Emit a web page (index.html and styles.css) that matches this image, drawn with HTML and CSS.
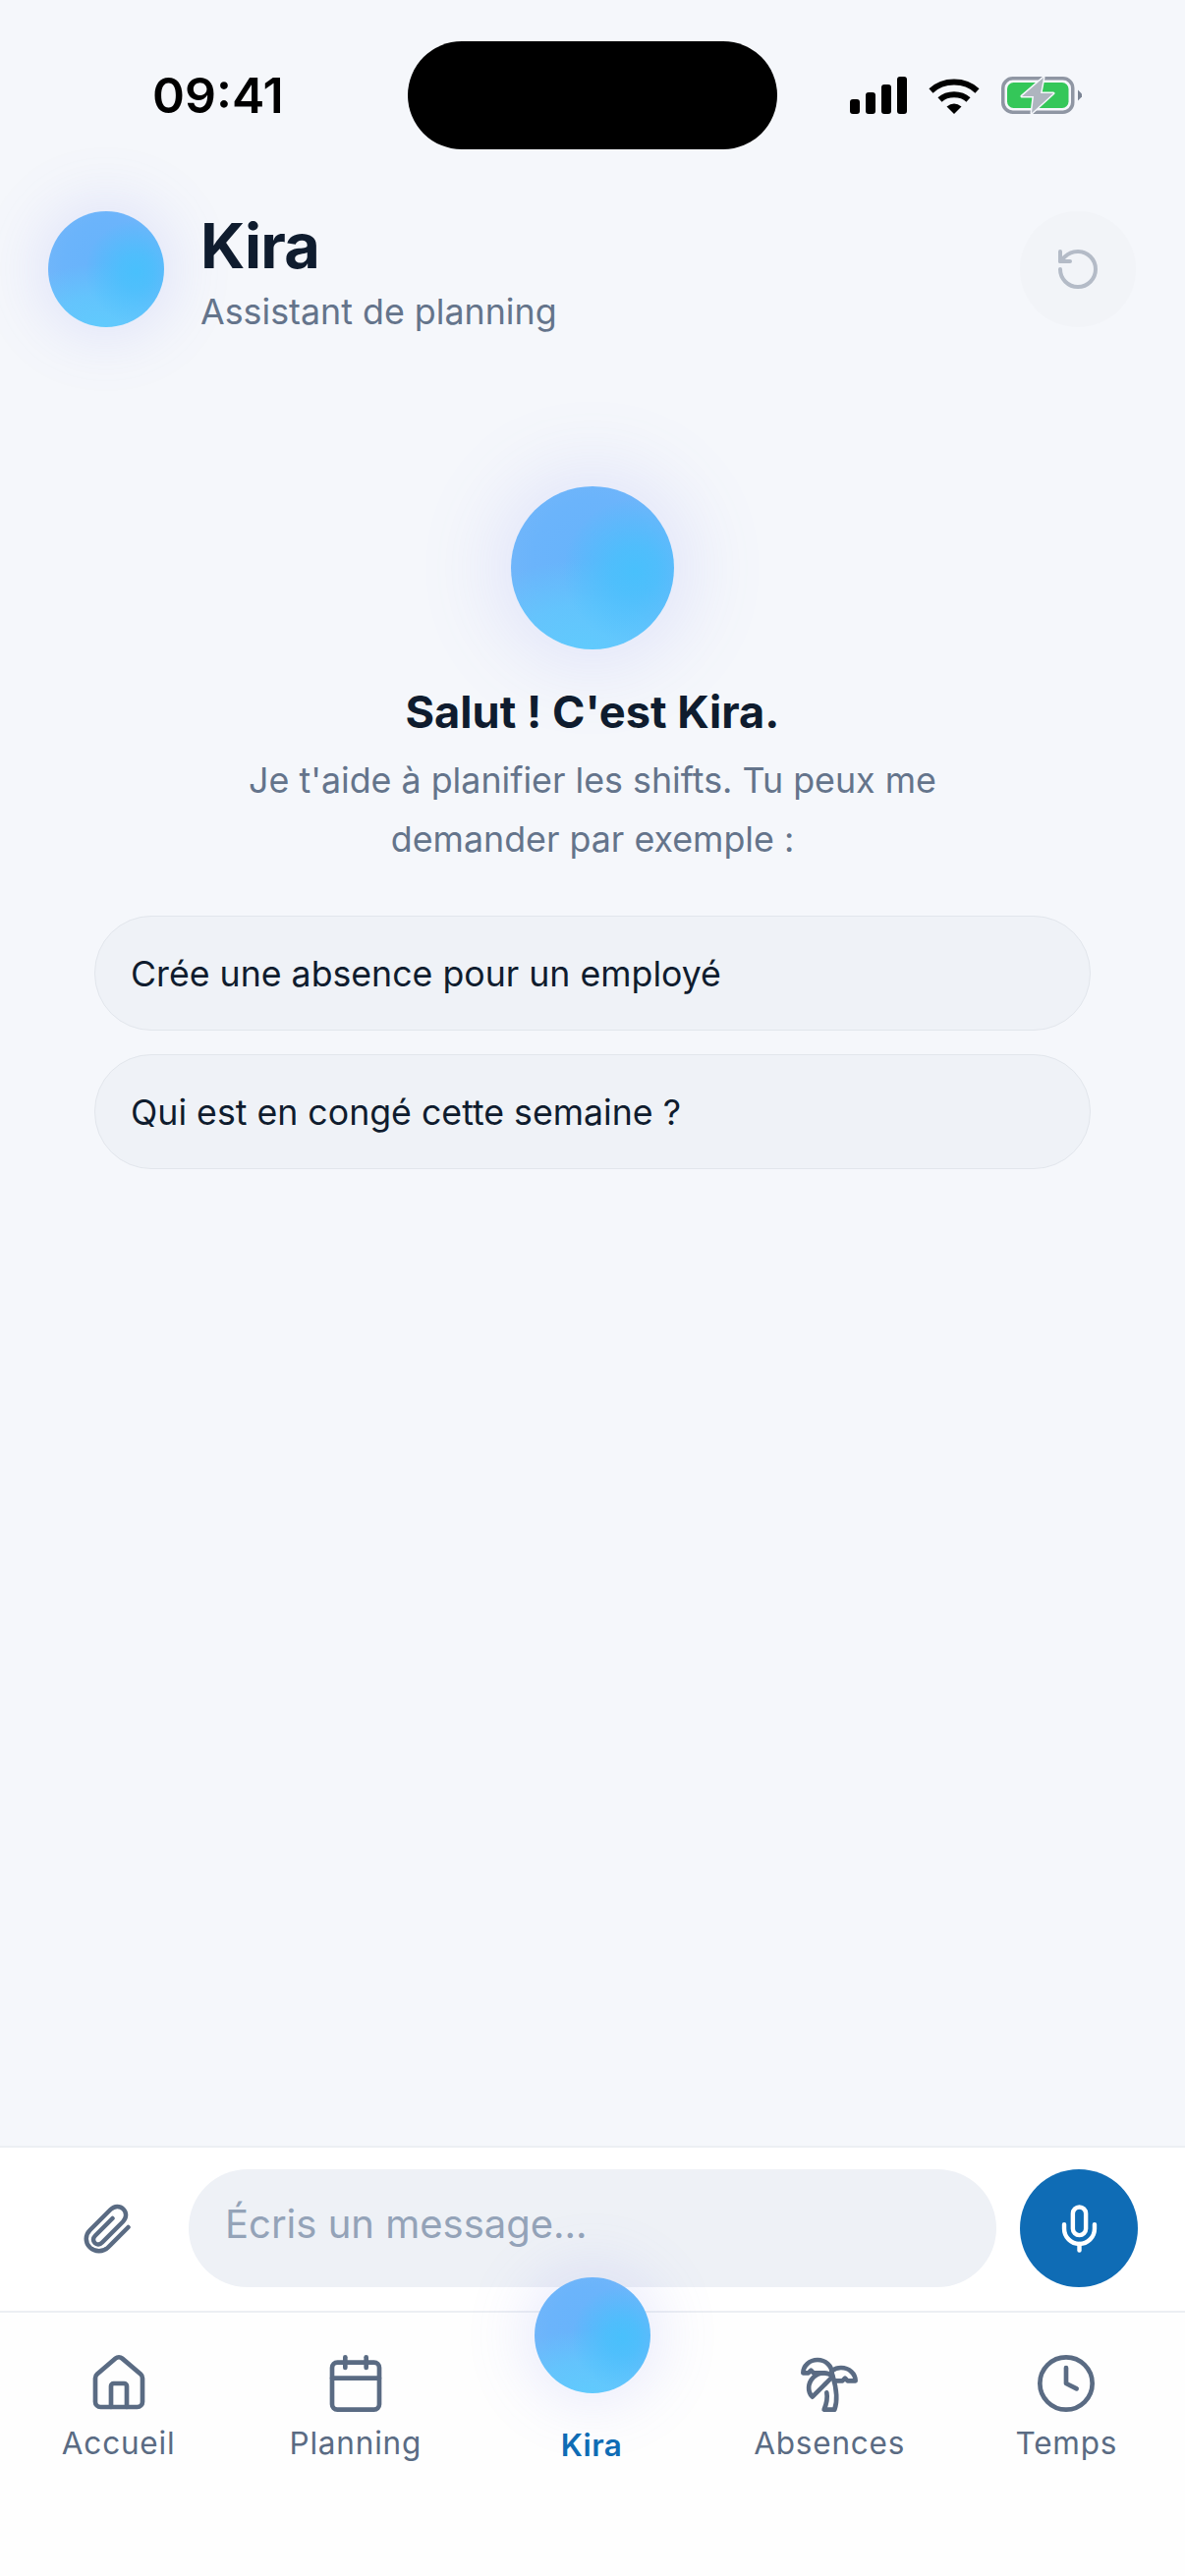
FILE: index.html
```html
<!DOCTYPE html>
<html lang="fr">
<head>
  <meta charset="UTF-8">
  <meta name="viewport" content="width=device-width, initial-scale=1.0">
  <title>Kira</title>
  <link rel="stylesheet" href="styles.css">
</head>
<body>
  <div class="status-bar">
    <span class="time">09:41</span>
    <div class="island"></div>
    <div class="status-icons">
      <svg class="signal" width="58" height="38" viewBox="0 0 58 38">
        <rect x="0" y="23" width="10" height="15" rx="3"/>
        <rect x="16" y="16" width="10" height="22" rx="3"/>
        <rect x="32" y="8" width="10" height="30" rx="3"/>
        <rect x="48" y="0" width="10" height="38" rx="3"/>
      </svg>
      <svg class="wifi" width="52" height="38" viewBox="0 0 52 38" fill="none" stroke="#000" stroke-width="6">
        <path d="M2.5 14.5C15 2.5 37 2.5 49.5 14.5"/>
        <path d="M11.5 23.5C19 16.5 33 16.5 40.5 23.5"/>
        <path d="M18.5 30.5Q26 24.5 33.500 30.5L26 38Z" fill="#000" stroke="none"/>
      </svg>
      <svg class="battery" width="82" height="38" viewBox="0 0 82 38">
        <rect x="1.750" y="1.750" width="71" height="34.500" rx="10" fill="none" stroke="#8f96a3" stroke-width="3.500"/>
        <rect x="6" y="6" width="62.500" height="26" rx="6.500" fill="#34c759"/>
        <path d="M78 13.500l4 4v3l-4 4z" fill="#7b8494"/>
        <path class="bolt" d="M43 1L21 20H33L31 37L53 17H40Z"/>
      </svg>
    </div>
  </div>

  <header class="top-bar">
    <div class="orb orb-small"></div>
    <div class="top-text">
      <h1>Kira</h1>
      <p>Assistant de planning</p>
    </div>
    <button class="reset-btn" aria-label="Recommencer">
      <svg width="48" height="48" viewBox="0 0 24 24" fill="none" stroke="currentColor" stroke-width="2" stroke-linecap="round" stroke-linejoin="round">
        <path d="M3 12a9 9 0 1 0 9-9 9.750 9.750 0 0 0-6.740 2.740L3 8"/>
        <path d="M3 3v5h5"/>
      </svg>
    </button>
  </header>

  <main class="welcome">
    <div class="orb orb-big"></div>
    <h2>Salut ! C'est Kira.</h2>
    <p>Je t'aide à planifier les shifts. Tu peux me<br>demander par exemple :</p>
    <div class="suggestions">
      <button class="chip">Crée une absence pour un employé</button>
      <button class="chip">Qui est en congé cette semaine ?</button>
    </div>
  </main>

  <div class="composer">
    <button class="attach-btn" aria-label="Joindre">
      <svg width="60" height="60" viewBox="0 0 60 60" fill="none" stroke="currentColor" stroke-width="4.500" stroke-linecap="round" stroke-linejoin="round">
        <path d="M51.500 29L31 49.500C26 54.500 17.500 54.500 12.500 49.500C7.500 44.500 7.500 37 12.500 32L33.500 11C37.500 7 43 7 46.500 10.500C50 14 50 19.500 46 23.500L25 44.500C22.500 47 19.500 47 17.500 45C15.500 43 15.500 40 18 37.500L35.500 20"/>
      </svg>
    </button>
    <input class="message-input" type="text" placeholder="Écris un message...">
    <button class="mic-btn" aria-label="Micro">
      <svg width="53" height="53" viewBox="0 0 24 24" fill="none" stroke="currentColor" stroke-width="2" stroke-linecap="round" stroke-linejoin="round">
        <path d="M12 19v3"/>
        <path d="M19 10v2a7 7 0 0 1-14 0v-2"/>
        <rect x="9" y="2" width="6" height="13" rx="3"/>
      </svg>
    </button>
  </div>

  <nav class="tab-bar">
    <a class="tab">
      <svg class="tab-icon" viewBox="0 0 24 24">
        <path d="M15 21v-8a1 1 0 0 0-1-1h-4a1 1 0 0 0-1 1v8"/>
        <path d="M3 10a2 2 0 0 1 .709-1.528l7-5.999a2 2 0 0 1 2.582 0l7 5.999A2 2 0 0 1 21 10v9a2 2 0 0 1-2 2H5a2 2 0 0 1-2-2z"/>
      </svg>
      <span>Accueil</span>
    </a>
    <a class="tab">
      <svg class="tab-icon" viewBox="0 0 24 24">
        <path d="M8 2v4"/>
        <path d="M16 2v4"/>
        <rect x="3" y="4" width="18" height="18" rx="2"/>
        <path d="M3 10h18"/>
      </svg>
      <span>Planning</span>
    </a>
    <a class="tab tab-active">
      <div class="orb orb-nav"></div>
      <span>Kira</span>
    </a>
    <a class="tab">
      <svg class="tab-icon" viewBox="0 0 24 24">
        <path d="M13 8c0-2.760-2.460-5-5.500-5S2 5.240 2 8h2l1-1 1 1h4"/>
        <path d="M13 7.140A5.820 5.820 0 0 1 16.500 6c3.040 0 5.500 2.240 5.500 5h-3l-1-1-1 1h-3"/>
        <path d="M5.890 9.710c-2.150 2.150-2.300 5.470-.350 7.430l4.240-4.250.700-.700.710-.710 2.120-2.120c-1.950-1.960-5.270-1.800-7.420.350"/>
        <path d="M11 15.500c.500 2.500-.170 4.500-1 6.500h4c2-5.500-.500-12-1-14"/>
      </svg>
      <span>Absences</span>
    </a>
    <a class="tab">
      <svg class="tab-icon" viewBox="0 0 24 24">
        <circle cx="12" cy="12" r="10"/>
        <path d="M12 6v6l4 2"/>
      </svg>
      <span>Temps</span>
    </a>
  </nav>
</body>
</html>
```

FILE: styles.css
```css
* {
  box-sizing: border-box;
}
body {
  margin: 0;
  width: 1206px;
  height: 2622px;
  overflow: hidden;
  display: flex;
  flex-direction: column;
  font-family: Inter, "Liberation Sans", sans-serif;
  background-color: #f5f7fb;
  color: #0f1c2e;
}
button {
  font-family: inherit;
  border: none;
  cursor: pointer;
}

/* status bar */
.status-bar {
  height: 152px;
  padding-top: 42px;
  display: grid;
  grid-template-columns: 415px 376px 1fr;
}
.time {
  height: 110px;
  padding-left: 155px;
  line-height: 110px;
  font-size: 50px;
  font-weight: 600;
  color: #000;
}
.island {
  height: 110px;
  background-color: #000;
  border-radius: 55px;
}
.status-icons {
  height: 38px;
  margin-top: 36px;
  padding-left: 74px;
  display: flex;
  gap: 22px;
}
.bolt {
  fill: #aeb5bf;
  stroke: #f5f7fb;
  stroke-width: 3;
  paint-order: stroke;
  stroke-linejoin: round;
}

/* orbs */
.orb {
  border-radius: 50%;
  flex-shrink: 0;
  background:
    radial-gradient(circle at 76% 52%, #49c0fc 0%, rgba(73, 192, 252, 0.8) 16%, rgba(73, 192, 252, 0) 48%),
    radial-gradient(ellipse 85% 55% at 46% 100%, #60cafd 0%, rgba(96, 202, 253, 0.7) 50%, rgba(96, 202, 253, 0) 100%),
    radial-gradient(circle at 50% 45%, #66b3fb 0%, #6bb4fb 50%, #78b8f9 100%);
}
.orb-small,
.orb-nav {
  width: 118px;
  height: 118px;
  box-shadow: 0 0 64px 8px rgba(112, 124, 240, 0.17);
}
.orb-small {
  margin-top: 1px;
}
.orb-big {
  width: 166px;
  height: 166px;
  box-shadow: 0 0 84px 14px rgba(112, 124, 240, 0.16);
}

/* header */
.top-bar {
  margin-top: 62px;
  padding: 0 50px 0 49px;
  display: flex;
  align-items: flex-start;
  gap: 38px;
}
.top-text {
  flex: 1;
  margin-left: -1px;
}
.top-text h1 {
  margin: 0;
  font-size: 63px;
  font-weight: 700;
  line-height: 72px;
  letter-spacing: -0.8px;
}
.top-text p {
  margin: 9px 0 0;
  font-size: 35.800px;
  line-height: 44px;
  color: #64748b;
}
.reset-btn {
  width: 118px;
  height: 118px;
  margin-top: 1px;
  border-radius: 50%;
  padding: 0;
  display: flex;
  align-items: center;
  justify-content: center;
  background-color: #f2f4f8;
  color: #b4bbc7;
}

/* empty state */
.welcome {
  flex: 1;
  padding: 156px 96px 0;
  display: flex;
  flex-direction: column;
  align-items: center;
  text-align: center;
}
.welcome h2 {
  margin: 36px 0 0;
  font-size: 45.200px;
  font-weight: 700;
  line-height: 56px;
}
.welcome p {
  margin: 11px 0 0;
  font-size: 35.800px;
  line-height: 60px;
  color: #64748b;
}
.suggestions {
  width: 100%;
  margin-top: 48px;
  display: flex;
  flex-direction: column;
  gap: 24px;
}
.chip {
  height: 117px;
  padding: 0 36px;
  text-align: left;
  font-size: 35.700px;
  color: #0f1c2e;
  background-color: #eff2f7;
  border: 1.5px solid #e2e6ec;
  border-radius: 58px;
}

/* message box */
.composer {
  height: 168px;
  padding: 0 48px 2px 49px;
  display: flex;
  align-items: center;
  gap: 24px;
  background-color: #fff;
  border-top: 2px solid #eceff3;
}
.attach-btn {
  width: 119px;
  height: 120px;
  padding: 0;
  display: flex;
  align-items: center;
  justify-content: center;
  background: none;
  color: #5a6b83;
}
.message-input {
  flex: 1;
  min-width: 0;
  height: 120px;
  padding: 0 37px 10px;
  font-family: inherit;
  font-size: 40px;
  background-color: #eef1f6;
  border: none;
  border-radius: 60px;
  outline: none;
}
.message-input::placeholder {
  color: #94a3b8;
  opacity: 1;
}
.mic-btn {
  width: 120px;
  height: 120px;
  border-radius: 50%;
  padding: 0;
  display: flex;
  align-items: center;
  justify-content: center;
  background-color: #0f6cb5;
  color: #fff;
}

/* bottom tabs */
.tab-bar {
  height: 270px;
  position: relative;
  padding-top: 40px;
  display: grid;
  grid-template-columns: repeat(5, 1fr);
  background-color: #fefefe;
  border-top: 2px solid #eceff3;
}
.tab {
  display: flex;
  flex-direction: column;
  align-items: center;
  font-size: 31.500px;
  font-weight: 400;
  line-height: 40px;
  letter-spacing: 0.8px;
  color: #5a6b83;
}
.tab-icon {
  width: 64px;
  height: 64px;
  margin-bottom: 9px;
  fill: none;
  stroke: currentColor;
  stroke-width: 1.750;
  stroke-linecap: round;
  stroke-linejoin: round;
}
.tab-active {
  font-weight: 600;
  letter-spacing: 0.4px;
  color: #0f6cb5;
}
.tab-active span {
  margin-left: -2px;
}
.orb-nav {
  margin-top: -76px;
  margin-bottom: 33px;
}
```
